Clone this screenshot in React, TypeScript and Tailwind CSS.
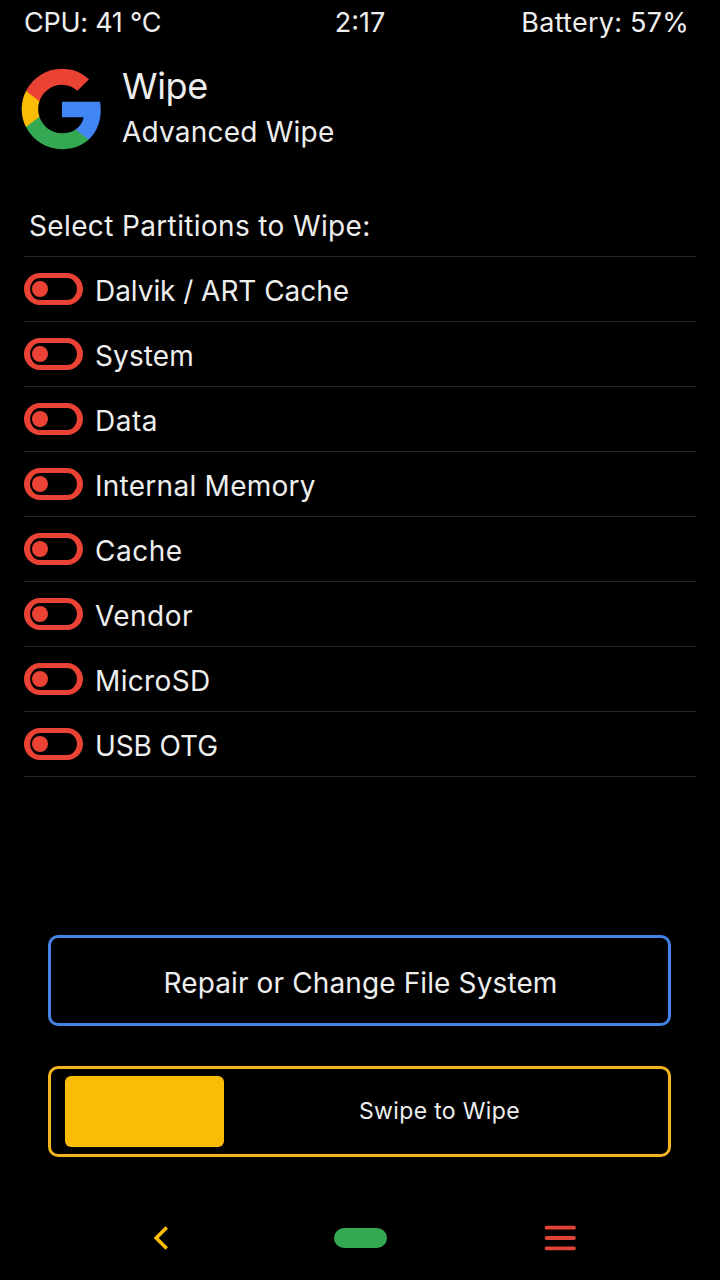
import { useState } from "react";

const partitions = [
  { name: "Dalvik / ART Cache", tracking: "tracking-[-0.05px]" },
  { name: "System", tracking: "tracking-[0.1px]" },
  { name: "Data", tracking: "tracking-[0.5px]" },
  { name: "Internal Memory", tracking: "tracking-[0.27px]" },
  { name: "Cache", tracking: "tracking-[0.5px]" },
  { name: "Vendor", tracking: "tracking-[0.45px]" },
  { name: "MicroSD", tracking: "tracking-[0.35px]" },
  { name: "USB OTG", tracking: "tracking-[-0.1px]" },
];

function GoogleLogo() {
  return (
    <svg viewBox="0 0 24 24" className="h-[88px] w-[88px] shrink-0">
      <path
        fill="#4285f4"
        d="M22.56 12.25c0-.78-.07-1.53-.2-2.25H12v4.26h5.92c-.26 1.37-1.04 2.53-2.21 3.31v2.77h3.57c2.08-1.92 3.28-4.74 3.28-8.09z"
      />
      <path
        fill="#34a853"
        d="M12 23c2.97 0 5.46-.98 7.28-2.66l-3.57-2.77c-.98.66-2.23 1.06-3.71 1.06-2.86 0-5.29-1.93-6.16-4.53H2.18v2.84C3.99 20.53 7.7 23 12 23z"
      />
      <path
        fill="#fbbc05"
        d="M5.84 14.09c-.22-.66-.35-1.36-.35-2.09s.13-1.43.35-2.09V7.07H2.18C1.43 8.55 1 10.22 1 12s.43 3.45 1.18 4.93l2.85-2.22.81-.62z"
      />
      <path
        fill="#ea4335"
        d="M12 5.38c1.62 0 3.06.56 4.21 1.64l3.15-3.15C17.45 2.09 14.97 1 12 1 7.7 1 3.99 3.47 2.18 7.07l3.66 2.84c.87-2.6 3.3-4.53 6.16-4.53z"
      />
    </svg>
  );
}

function Toggle({ on }: { on: boolean }) {
  return (
    <span
      className={`flex h-8 w-[59px] shrink-0 items-center rounded-full border-x-[6px] border-y-[5px] border-[#ea4335] px-0.5 ${
        on ? "justify-end" : "justify-start"
      }`}
    >
      <span className="h-4 w-4 rounded-full bg-[#ea4335]" />
    </span>
  );
}

export default function App() {
  const [selected, setSelected] = useState<string[]>([]);

  const toggle = (name: string) =>
    setSelected((prev) => (prev.includes(name) ? prev.filter((n) => n !== name) : [...prev, name]));

  return (
    <div className="flex h-[1280px] w-[720px] flex-col overflow-hidden bg-black font-['Inter','Liberation_Sans',sans-serif] text-[28px] text-[#eeeeee]">
      <div className="grid h-11 grid-cols-3 whitespace-nowrap pl-6 pr-[31px] text-[27px] leading-[46px]">
        <span className="tracking-[-0.25px]">CPU: 41 °C</span>
        <span className="pl-[7px] text-center">2:17</span>
        <span className="text-right tracking-[0.25px]">Battery: 57%</span>
      </div>

      <header className="flex h-[156px] pl-[18px] pt-[21px]">
        <GoogleLogo />
        <div className="ml-4 flex flex-col">
          <h1 className="h-11 text-4xl leading-[42px] tracking-[-0.3px]">Wipe</h1>
          <h2 className="leading-[46px] tracking-[0.22px]">Advanced Wipe</h2>
        </div>
      </header>

      <main className="px-6">
        <p className="h-[57px] border-b border-[#262626] pl-[5px] leading-[52px] tracking-[0.36px]">
          Select Partitions to Wipe:
        </p>
        {partitions.map((p) => (
          <button
            key={p.name}
            onClick={() => toggle(p.name)}
            className="flex h-[65px] w-full items-center border-b border-[#262626] text-left"
          >
            <Toggle on={selected.includes(p.name)} />
            <span className={`ml-3 pt-1 ${p.tracking}`}>{p.name}</span>
          </button>
        ))}
      </main>

      <div className="mt-[158px] flex flex-col gap-10 pl-12 pr-[49px]">
        <button className="h-[91px] rounded-[10px] border-[3px] border-[#4682e4] pl-0.5 pt-[5px] tracking-[0.12px]">
          Repair or Change File System
        </button>
        <div className="flex h-[91px] items-center rounded-[10px] border-[3px] border-[#f0b51f] pl-3.5">
          <div className="mb-px h-[71px] w-[159px] rounded-md bg-[#fbbc05]" />
          <span className="ml-[135px] text-[23px] tracking-[0.35px]">Swipe to Wipe</span>
        </div>
      </div>

      <nav className="mt-[69px] flex h-6 items-center">
        <button className="ml-[153px]">
          <svg viewBox="0 0 16 24" className="h-6 w-4 fill-none stroke-[#fbbc05] stroke-[3.6]">
            <path d="M13.700 1.500 3.200 12l10.500 10.500" />
          </svg>
        </button>
        <button className="ml-[165px] h-5 w-[53px] rounded-[10px] bg-[#34a853]" />
        <button className="ml-[156px]">
          <svg viewBox="0 0 33 26" className="h-[26px] w-[33px] stroke-[#e04438] stroke-[3.8]" strokeLinecap="round">
            <path d="M3.500 2.700h27.500M3.500 13h27.500M3.500 23.300h27.500" />
          </svg>
        </button>
      </nav>
    </div>
  );
}
